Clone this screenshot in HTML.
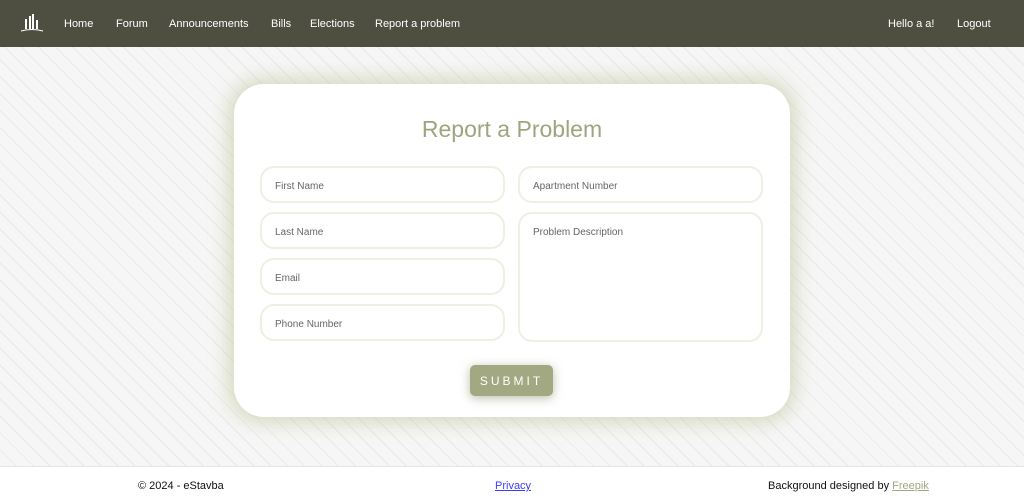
<!DOCTYPE html>
<html><head><style>
*{box-sizing:border-box;margin:0;padding:0}
body{width:1024px;height:502px;overflow:hidden;font-family:"Liberation Sans",sans-serif;background:#f3f3f3;position:relative}
.bg{position:absolute;top:47px;left:0;width:1024px;height:419px;background:
repeating-linear-gradient(45deg,rgba(0,0,0,0) 0 11px,rgba(0,0,0,.06) 11px 12px),#f6f6f6}
nav{position:absolute;top:0;left:0;width:1024px;height:47px;background:#4f4f41;color:#fff;font-size:11px}
nav span{position:absolute;top:18px}
.card{position:absolute;left:234px;top:84px;width:556px;height:333px;background:#fff;border-radius:30px;box-shadow:0 0 18px 6px rgba(195,202,160,.6)}
h1{position:absolute;top:32px;width:100%;text-align:center;font-weight:normal;font-size:23px;color:#9ea57e}
.in{position:absolute;width:245px;height:37px;border:2px solid #efefe2;border-radius:14px;font-size:10px;color:#666;padding:13px 0 0 13px}
.btn{position:absolute;left:236px;top:281px;width:83px;height:31px;background:#a2a882;border-radius:5px;color:#fff;font-size:12px;letter-spacing:3px;text-align:center;line-height:32px;box-shadow:0 2px 10px rgba(120,125,90,.5)}
footer{position:absolute;top:466px;left:0;width:1024px;height:36px;background:#fff;border-top:1px solid #e4e4e4;font-size:11px;color:#111}
footer span{position:absolute;top:13px}
</style></head><body>
<div class="bg"></div>
<nav>
<svg style="position:absolute;left:20px;top:14px" width="24" height="18" viewBox="0 0 24 18"><g fill="#fff"><rect x="5" y="5" width="2" height="10"/><rect x="9" y="2" width="2" height="13"/><rect x="12" y="0" width="2" height="15"/><rect x="16" y="6" width="2" height="9"/></g><path d="M1 17 Q12 14 23 17" stroke="#fff" fill="none"/></svg>
<span style="left:64px">Home</span><span style="left:116px">Forum</span><span style="left:169px">Announcements</span><span style="left:271px">Bills</span><span style="left:310px">Elections</span><span style="left:375px">Report a problem</span>
<span style="left:888px">Hello a a!</span><span style="left:957px">Logout</span>
</nav>
<div class="card">
<h1>Report a Problem</h1>
<div class="in" style="left:26px;top:82px">First Name</div>
<div class="in" style="left:26px;top:128px">Last Name</div>
<div class="in" style="left:26px;top:174px">Email</div>
<div class="in" style="left:26px;top:220px">Phone Number</div>
<div class="in" style="left:284px;top:82px">Apartment Number</div>
<div class="in" style="left:284px;top:128px;height:130px">Problem Description</div>
<div class="btn">SUBMIT</div>
</div>
<footer>
<span style="left:138px">© 2024 - eStavba</span>
<span style="left:495px;color:#3b3bff;text-decoration:underline">Privacy</span>
<span style="left:768px">Background designed by <u style="color:#a2a882">Freepik</u></span>
</footer>
</body></html>
